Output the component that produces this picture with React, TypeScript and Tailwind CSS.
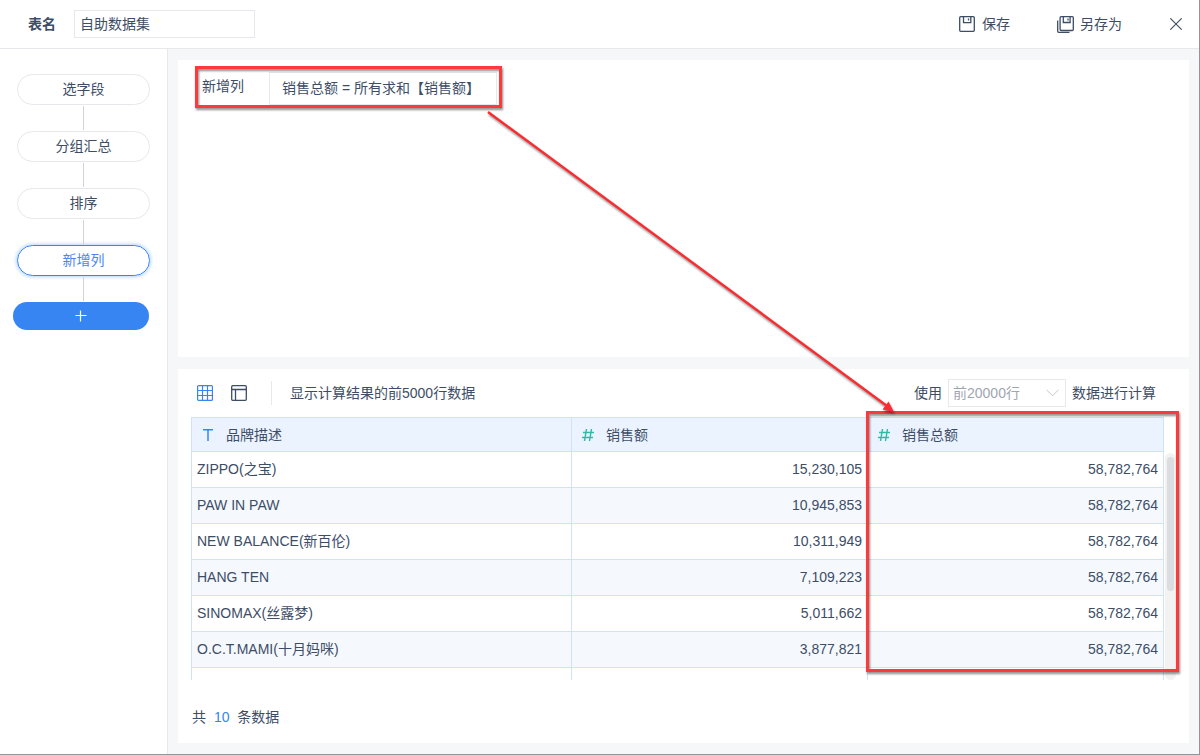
import { useState } from "react";

interface Row {
  brand: string;
  sales: string;
  total: string;
}

const steps = ["选字段", "分组汇总", "排序", "新增列"];

const rows: Row[] = [
  { brand: "ZIPPO(之宝)", sales: "15,230,105", total: "58,782,764" },
  { brand: "PAW IN PAW", sales: "10,945,853", total: "58,782,764" },
  { brand: "NEW BALANCE(新百伦)", sales: "10,311,949", total: "58,782,764" },
  { brand: "HANG TEN", sales: "7,109,223", total: "58,782,764" },
  { brand: "SINOMAX(丝露梦)", sales: "5,011,662", total: "58,782,764" },
  { brand: "O.C.T.MAMI(十月妈咪)", sales: "3,877,821", total: "58,782,764" },
];

function SaveIcon() {
  return (
    <svg width="16" height="16" viewBox="0 0 16 16" fill="none" stroke="currentColor" strokeWidth="1.3">
      <rect x="0.7" y="0.7" width="14.6" height="14.6" rx="1" />
      <path d="M4.500 0.7v6h7.300V0.7M9.500 2.600v2" />
    </svg>
  );
}

function SaveAsIcon() {
  return (
    <svg width="17" height="17" viewBox="0 0 17 17" fill="none" stroke="currentColor" strokeWidth="1.3">
      <rect x="3.1" y="0.7" width="13.2" height="13.8" rx="1" />
      <path d="M6.300 0.7v5.800h6.800V0.7M11 2.400v2M0.7 4.500v10.800a1 1 0 0 0 1 1h10.800" />
    </svg>
  );
}

function GridIcon() {
  return (
    <svg width="16" height="16" viewBox="0 0 16 16" fill="none" stroke="currentColor" strokeWidth="1.2">
      <rect x="0.6" y="0.6" width="14.8" height="14.8" rx="1" />
      <path d="M0.5 5.5h15M0.5 10.5h15M5.5 0.5v15M10.5 0.5v15" />
    </svg>
  );
}

function LayoutIcon() {
  return (
    <svg width="16" height="16" viewBox="0 0 16 16" fill="none" stroke="currentColor" strokeWidth="1.3">
      <rect x="0.7" y="0.7" width="14.6" height="14.6" rx="1" />
      <path d="M0.6 4.5h14.8M4.5 4.5v11" />
    </svg>
  );
}

function TextTypeIcon() {
  return (
    <svg width="12" height="12" viewBox="0 0 12 12" fill="none" stroke="#3685f2" strokeWidth="1.5">
      <path d="M1 0.8h10M6 0.8V12" />
    </svg>
  );
}

function NumberTypeIcon() {
  return (
    <svg width="12" height="12" viewBox="0 0 12 12" fill="none" stroke="#36b8a6" strokeWidth="1.4">
      <path d="M1 3.5h11M0 8.5h11M4.5 0L2.5 12M9.5 0L7.5 12" />
    </svg>
  );
}

function Header() {
  const [name, setName] = useState("自助数据集");

  return (
    <header className="box-content flex h-12 items-center border-b border-[#e6e8eb] bg-white pl-7 pr-[17px]">
      <label htmlFor="table-name" className="font-bold">
        表名
      </label>
      <input
        id="table-name"
        type="text"
        value={name}
        onChange={(e) => setName(e.target.value)}
        className="ml-[18px] h-7 w-[181px] border border-[#e6e8eb] px-[5px] pb-0.5 outline-none"
      />
      <div className="ml-auto flex items-center">
        <button type="button" className="flex items-center gap-[7px]">
          <SaveIcon />
          保存
        </button>
        <button type="button" className="ml-[47px] flex items-center gap-[6px]">
          <SaveAsIcon />
          另存为
        </button>
        <button type="button" aria-label="关闭" className="ml-12">
          <svg width="12" height="12" viewBox="0 0 12 12" fill="none" stroke="currentColor" strokeWidth="1.1">
            <path d="M0.3 0.3l11.4 11.4M11.7 0.3L0.3 11.7" />
          </svg>
        </button>
      </div>
    </header>
  );
}

function Sidebar() {
  const [active, setActive] = useState("新增列");

  return (
    <aside className="flex w-[168px] shrink-0 flex-col items-center border-r border-[#e6e8eb] bg-white pt-[25px]">
      {steps.map((step) => (
        <div key={step} className="flex flex-col items-center">
          <button
            type="button"
            onClick={() => setActive(step)}
            className={
              step === active
                ? "h-[31px] w-[133px] rounded-full border border-[#3685f2] pb-0.5 text-[#4c86f5] shadow-[0_0_4px_#8fbdfa]"
                : "h-[31px] w-[133px] rounded-full border border-[#e6e8eb] pb-0.5"
            }
          >
            {step}
          </button>
          <div className="my-px h-6 w-px bg-[#d0d4d8]" />
        </div>
      ))}
      <button
        type="button"
        aria-label="添加步骤"
        className="ml-[13px] flex h-7 w-[136px] items-center justify-center self-start rounded-full bg-[#3685f2] text-white"
      >
        <svg width="12" height="12" viewBox="0 0 12 12" fill="none" stroke="currentColor" strokeWidth="1.2">
          <path d="M0.5 5.5h11M5.5 0.5v11" />
        </svg>
      </button>
    </aside>
  );
}

function FormulaPanel() {
  return (
    <section className="flex-1 bg-white pl-6 pt-3">
      <div className="relative flex h-[33px] w-fit">
        <span className="w-[67px] leading-7">新增列</span>
        <div className="w-[228px] border border-[#e6e8eb] px-3 leading-[30px]">
          销售总额 = 所有求和【销售额】
        </div>
        <div className="pointer-events-none absolute -bottom-[3px] -left-[7px] -right-[5px] -top-[6px] border-3 border-[#fb3b3b] drop-shadow-[1px_2px_1px_rgba(0,0,0,0.45)]" />
      </div>
    </section>
  );
}

function DataTable() {
  return (
    <div className="relative flex">
      <table className="flex-1 table-fixed border-separate border-spacing-0 border-l border-t border-[#cfe2fb]">
        <colgroup>
          <col />
          <col className="w-[296px]" />
          <col className="w-[296px]" />
        </colgroup>
        <thead>
          <tr className="h-[34px] bg-[#eaf3ff] text-left">
            <th className="border-b border-r border-[#cfe2fb] pl-[10px] font-normal">
              <span className="flex items-center gap-3">
                <TextTypeIcon />
                品牌描述
              </span>
            </th>
            <th className="border-b border-r border-[#cfe2fb] pl-[10px] font-normal">
              <span className="flex items-center gap-3">
                <NumberTypeIcon />
                销售额
              </span>
            </th>
            <th className="border-b border-r border-[#cfe2fb] pl-[10px] font-normal">
              <span className="flex items-center gap-3">
                <NumberTypeIcon />
                销售总额
              </span>
            </th>
          </tr>
        </thead>
        <tbody>
          {rows.map((row) => (
            <tr key={row.brand} className="h-9 even:bg-[#f5f9fe]">
              <td className="border-b border-r border-[#cfe2fb] px-[5px] pb-0.5">{row.brand}</td>
              <td className="border-b border-r border-[#cfe2fb] px-[5px] pb-0.5 text-right">{row.sales}</td>
              <td className="border-b border-r border-[#cfe2fb] px-[5px] pb-0.5 text-right">{row.total}</td>
            </tr>
          ))}
          <tr className="h-3">
            <td className="border-r border-[#cfe2fb]" />
            <td className="border-r border-[#cfe2fb]" />
            <td className="border-r border-[#cfe2fb]" />
          </tr>
        </tbody>
      </table>
      <div className="ml-px mr-[3px] mt-9 w-[11px] rounded-full bg-[#f2f2f3] px-[2px] pt-1">
        <div className="h-[134px] rounded-full bg-[#dcdde0]" />
      </div>
      <div className="pointer-events-none absolute -top-[6px] bottom-2 right-0 w-[313px] border-3 border-[#fb3b3b] drop-shadow-[1px_2px_1px_rgba(0,0,0,0.45)]" />
    </div>
  );
}

function PreviewPanel() {
  const [limit, setLimit] = useState("20000");

  return (
    <section className="bg-white pb-4 pl-[13px] pr-[10px] pt-[10px]">
      <div className="mb-[10px] flex h-7 items-center pl-[6px] pr-[23px]">
        <button type="button" aria-label="表格" className="text-[#3685f2]">
          <GridIcon />
        </button>
        <button type="button" aria-label="布局" className="ml-[18px]">
          <LayoutIcon />
        </button>
        <div className="ml-6 mr-[18px] h-6 w-px bg-[#e6e8eb]" />
        <span>显示计算结果的前5000行数据</span>
        <label htmlFor="row-limit" className="ml-auto">
          使用
        </label>
        <div className="relative mx-[6px]">
          <select
            id="row-limit"
            value={limit}
            onChange={(e) => setLimit(e.target.value)}
            className="block h-7 w-[118px] appearance-none border border-[#e6e8eb] bg-white pl-1 text-[#a0a6b1] outline-none"
          >
            <option value="5000">前5000行</option>
            <option value="20000">前20000行</option>
          </select>
          <svg
            className="pointer-events-none absolute right-[7px] top-[10px]"
            width="13"
            height="8"
            viewBox="0 0 13 8"
            fill="none"
            stroke="#c3c8cf"
          >
            <path d="M0.5 0.8l6 6 6-6" />
          </svg>
        </div>
        <span>数据进行计算</span>
      </div>
      <DataTable />
      <p className="mt-[27px] pl-px leading-5">
        共 <span className="mx-1 text-[#3685f2]">10</span> 条数据
      </p>
    </section>
  );
}

export default function App() {
  return (
    <div className="flex min-h-screen flex-col border-b border-r border-[#929498] bg-[#f6f7f9] font-['Liberation_Sans','Noto_Sans_CJK_SC',sans-serif] text-sm text-[#3d4d66]">
      <Header />
      <div className="flex flex-1">
        <Sidebar />
        <main className="relative flex flex-1 flex-col gap-3 px-[10px] py-[11px]">
          <FormulaPanel />
          <PreviewPanel />
          <svg
            className="pointer-events-none absolute left-[319px] top-[62px] drop-shadow-[1px_2px_1px_rgba(0,0,0,0.45)]"
            width="408"
            height="302"
            viewBox="0 0 408 302"
            fill="none"
          >
            <path d="M1 1L400 295" stroke="#fb2b2f" strokeWidth="2.4" />
            <path d="M407 301L395.500 298.500L401.500 290.500Z" fill="#fb2b2f" />
          </svg>
        </main>
      </div>
    </div>
  );
}
